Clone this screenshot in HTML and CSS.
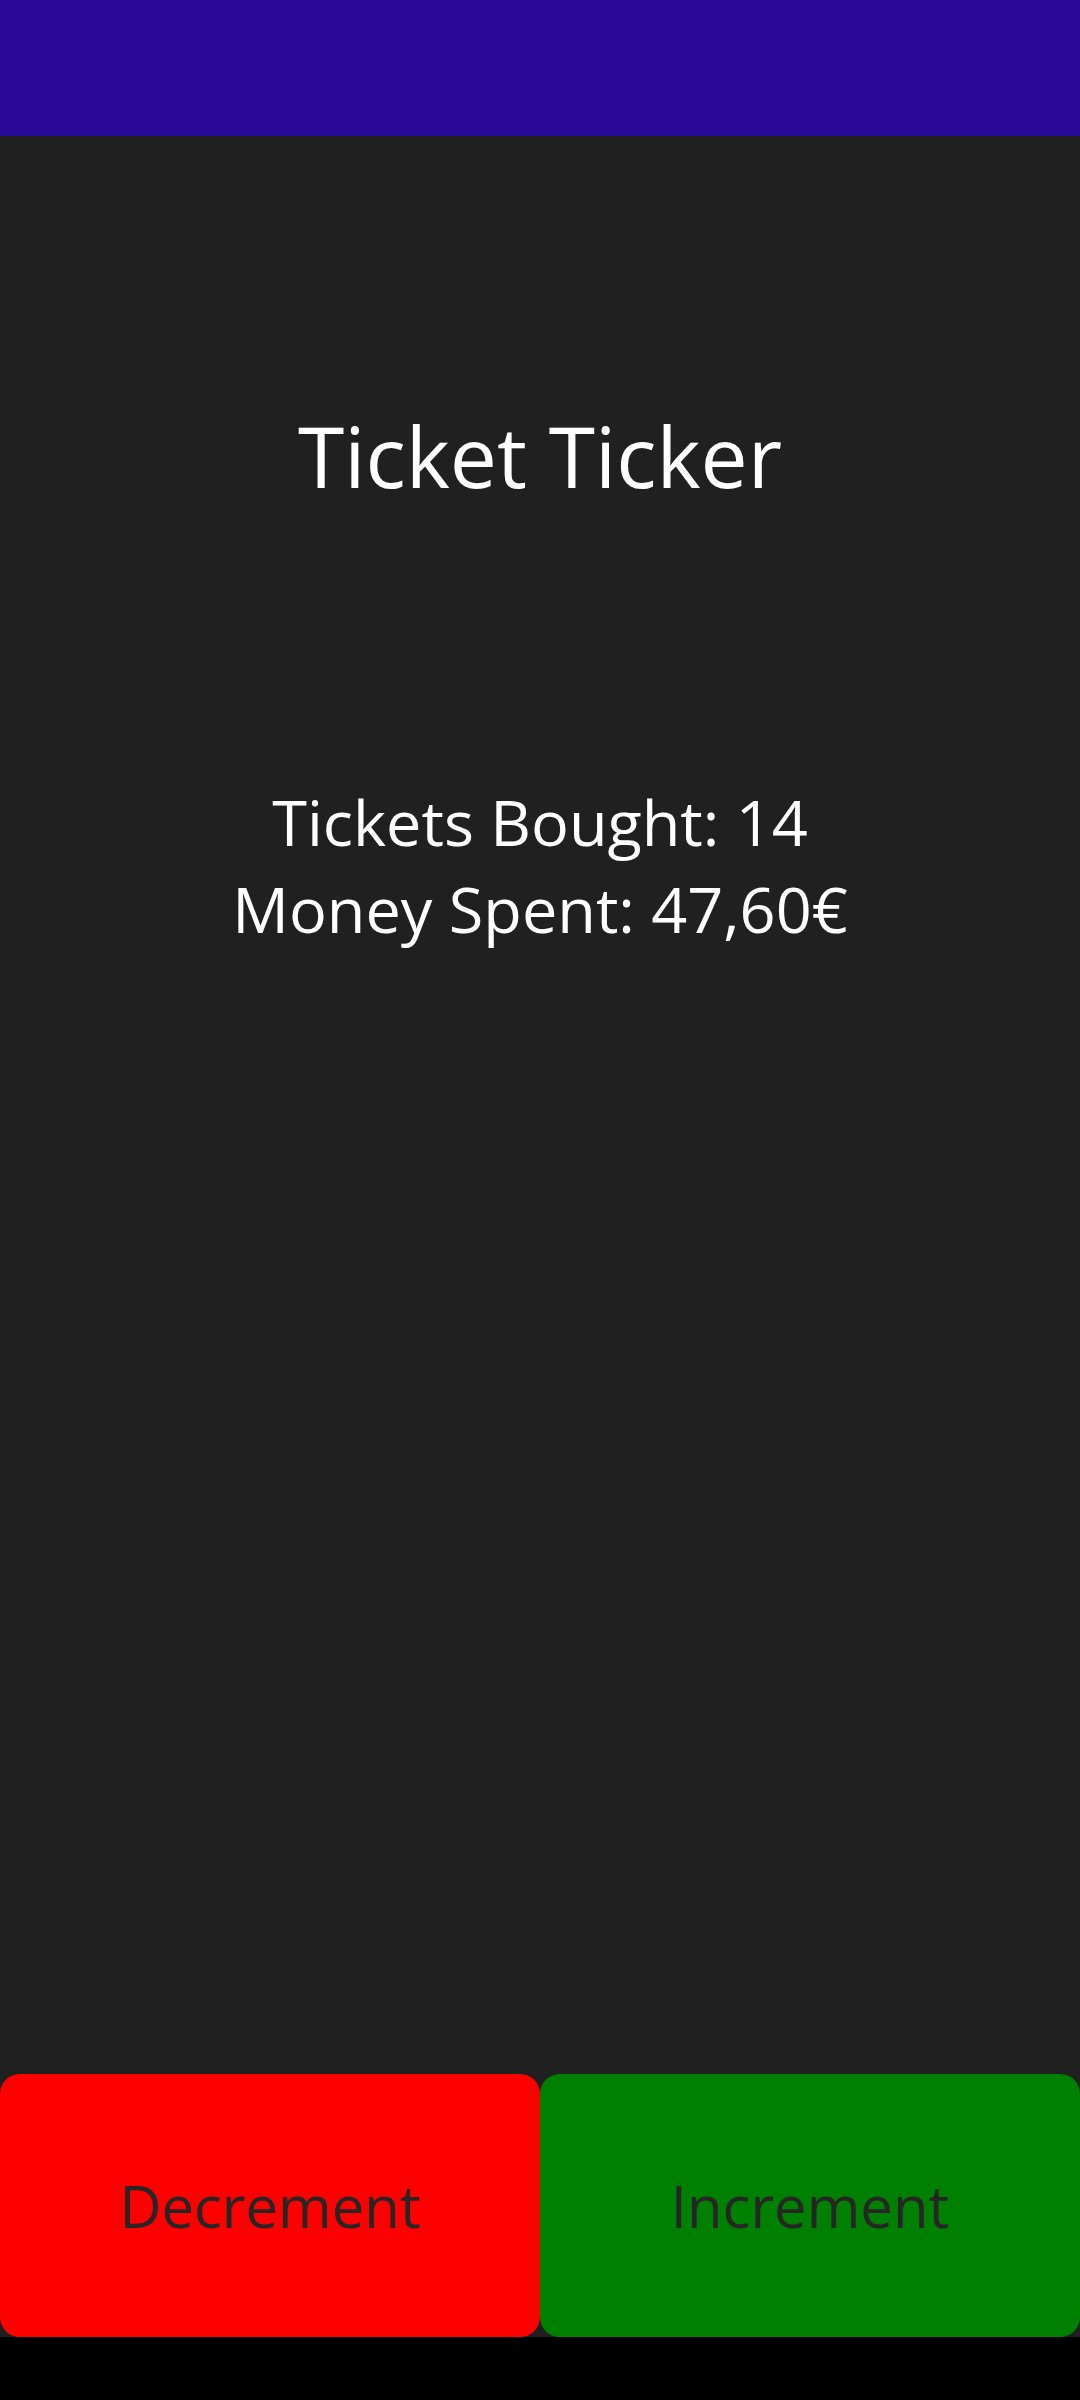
FILE: index.html
```html
<!DOCTYPE html>
<html lang="en">
<head>
<meta charset="utf-8">
<title>Ticket Ticker</title>
<link rel="stylesheet" href="styles.css">
</head>
<body>
<div class="app">
  <header class="appbar"></header>
  <main class="content">
    <h1 class="title">Ticket Ticker</h1>
    <div class="stats">
      <p class="stat">Tickets Bought: 14</p>
      <p class="stat">Money Spent: 47,60€</p>
    </div>
  </main>
  <div class="actions">
    <button class="btn btn-dec">Decrement</button>
    <button class="btn btn-inc">Increment</button>
  </div>
  <div class="navbar"></div>
</div>
</body>
</html>
```
FILE: styles.css
```css
* { box-sizing: border-box; }
html, body {
  margin: 0;
  padding: 0;
  background: #000;
}
.app {
  width: 1080px;
  height: 2400px;
  display: flex;
  flex-direction: column;
  background: #202020;
  font-family: "Open Sans", "Noto Sans", sans-serif;
}
.appbar {
  height: 136px;
  flex: none;
  background: #2b0a98;
}
.content {
  flex: 1;
  display: flex;
  flex-direction: column;
  align-items: center;
  color: #ffffff;
}
.title {
  margin: 263px 0 0;
  font-size: 84px;
  font-weight: 400;
  line-height: 114px;
}
.stats {
  margin-top: 265px;
  display: flex;
  flex-direction: column;
  align-items: center;
}
.stat {
  margin: 0;
  font-size: 63px;
  line-height: 87px;
}
.actions {
  flex: none;
  height: 263px;
  display: flex;
}
.btn {
  flex: 1;
  border: none;
  border-radius: 20px;
  margin: 0;
  padding: 0;
  font-family: "Open Sans", "Noto Sans", sans-serif;
  font-size: 58px;
  color: #262626;
}
.btn-dec { background: #ff0000; }
.btn-inc { background: #008000; }
.navbar {
  flex: none;
  height: 63px;
  background: #000;
}
```
